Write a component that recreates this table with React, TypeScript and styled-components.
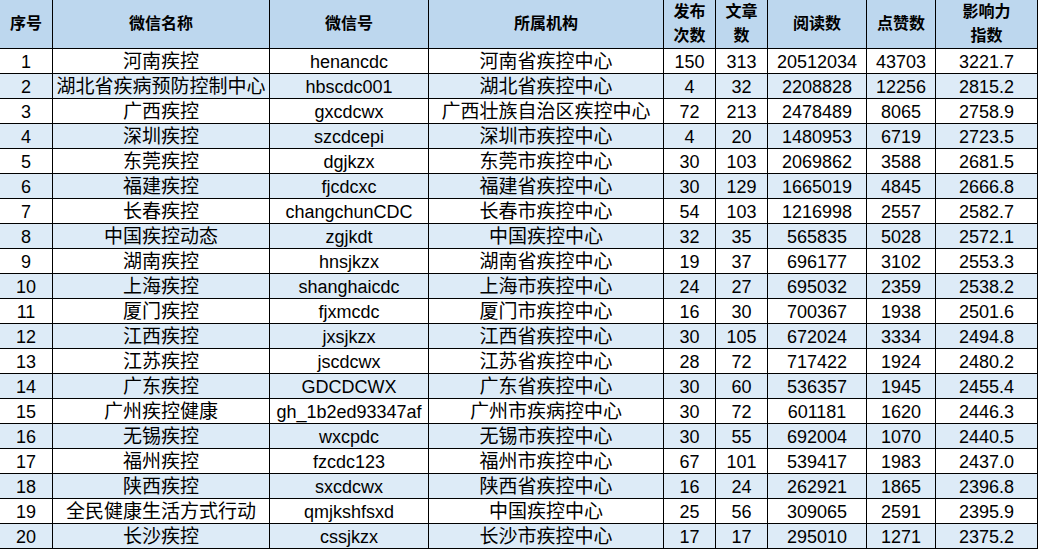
import React from "react";
import styled, { createGlobalStyle } from "styled-components";

const Global = createGlobalStyle`
  html, body { margin: 0; padding: 0; background: #fff; overflow: hidden; }
  body { font-family: "Liberation Sans", "Noto Sans CJK SC", sans-serif; }
`;

const Grid = styled.div`
  display: grid;
  grid-template-columns: 52px 216px 158px 234px 51px 51px 98px 68px 101px;
  grid-template-rows: 48px;
  grid-auto-rows: 24px;
  gap: 1px;
  padding: 1px;
  background: #000;
  width: max-content;
  margin: -1px 0 0 -1px;
`;

const HeadCell = styled.div`
  background: #bdd7ee;
  display: flex;
  align-items: center;
  justify-content: center;
  text-align: center;
  font-weight: bold;
  font-size: 16px;
  line-height: 24px;
  color: #000;
  white-space: pre-line;
`;

const Cell = styled.div<{ $alt: boolean; $cjk: boolean }>`
  background: ${(p) => (p.$alt ? "#ddebf7" : "#ffffff")};
  display: flex;
  align-items: center;
  justify-content: center;
  font-size: ${(p) => (p.$cjk ? "19px" : "18px")};
  line-height: 24px;
  padding-top: 1px;
  color: #000;
  white-space: nowrap;
  overflow: hidden;
`;

const headers = ["序号", "微信名称", "微信号", "所属机构", "发布\n次数", "文章\n数", "阅读数", "点赞数", "影响力\n指数"];

const rows: (string | number)[][] = [
  [1, "河南疾控", "henancdc", "河南省疾控中心", 150, 313, 20512034, 43703, "3221.7"],
  [2, "湖北省疾病预防控制中心", "hbscdc001", "湖北省疾控中心", 4, 32, 2208828, 12256, "2815.2"],
  [3, "广西疾控", "gxcdcwx", "广西壮族自治区疾控中心", 72, 213, 2478489, 8065, "2758.9"],
  [4, "深圳疾控", "szcdcepi", "深圳市疾控中心", 4, 20, 1480953, 6719, "2723.5"],
  [5, "东莞疾控", "dgjkzx", "东莞市疾控中心", 30, 103, 2069862, 3588, "2681.5"],
  [6, "福建疾控", "fjcdcxc", "福建省疾控中心", 30, 129, 1665019, 4845, "2666.8"],
  [7, "长春疾控", "changchunCDC", "长春市疾控中心", 54, 103, 1216998, 2557, "2582.7"],
  [8, "中国疾控动态", "zgjkdt", "中国疾控中心", 32, 35, 565835, 5028, "2572.1"],
  [9, "湖南疾控", "hnsjkzx", "湖南省疾控中心", 19, 37, 696177, 3102, "2553.3"],
  [10, "上海疾控", "shanghaicdc", "上海市疾控中心", 24, 27, 695032, 2359, "2538.2"],
  [11, "厦门疾控", "fjxmcdc", "厦门市疾控中心", 16, 30, 700367, 1938, "2501.6"],
  [12, "江西疾控", "jxsjkzx", "江西省疾控中心", 30, 105, 672024, 3334, "2494.8"],
  [13, "江苏疾控", "jscdcwx", "江苏省疾控中心", 28, 72, 717422, 1924, "2480.2"],
  [14, "广东疾控", "GDCDCWX", "广东省疾控中心", 30, 60, 536357, 1945, "2455.4"],
  [15, "广州疾控健康", "gh_1b2ed93347af", "广州市疾病控中心", 30, 72, 601181, 1620, "2446.3"],
  [16, "无锡疾控", "wxcpdc", "无锡市疾控中心", 30, 55, 692004, 1070, "2440.5"],
  [17, "福州疾控", "fzcdc123", "福州市疾控中心", 67, 101, 539417, 1983, "2437.0"],
  [18, "陕西疾控", "sxcdcwx", "陕西省疾控中心", 16, 24, 262921, 1865, "2396.8"],
  [19, "全民健康生活方式行动", "qmjkshfsxd", "中国疾控中心", 25, 56, 309065, 2591, "2395.9"],
  [20, "长沙疾控", "cssjkzx", "长沙市疾控中心", 17, 17, 295010, 1271, "2375.2"],
];

const cjkCols = new Set([1, 3]);

export default function App() {
  return (
    <>
      <Global />
      <Grid>
        {headers.map((h) => (
          <HeadCell key={h}>{h}</HeadCell>
        ))}
        {rows.map((r, i) =>
          r.map((v, j) => (
            <Cell key={`${i}-${j}`} $alt={i % 2 === 1} $cjk={cjkCols.has(j)}>
              {v}
            </Cell>
          ))
        )}
      </Grid>
    </>
  );
}
